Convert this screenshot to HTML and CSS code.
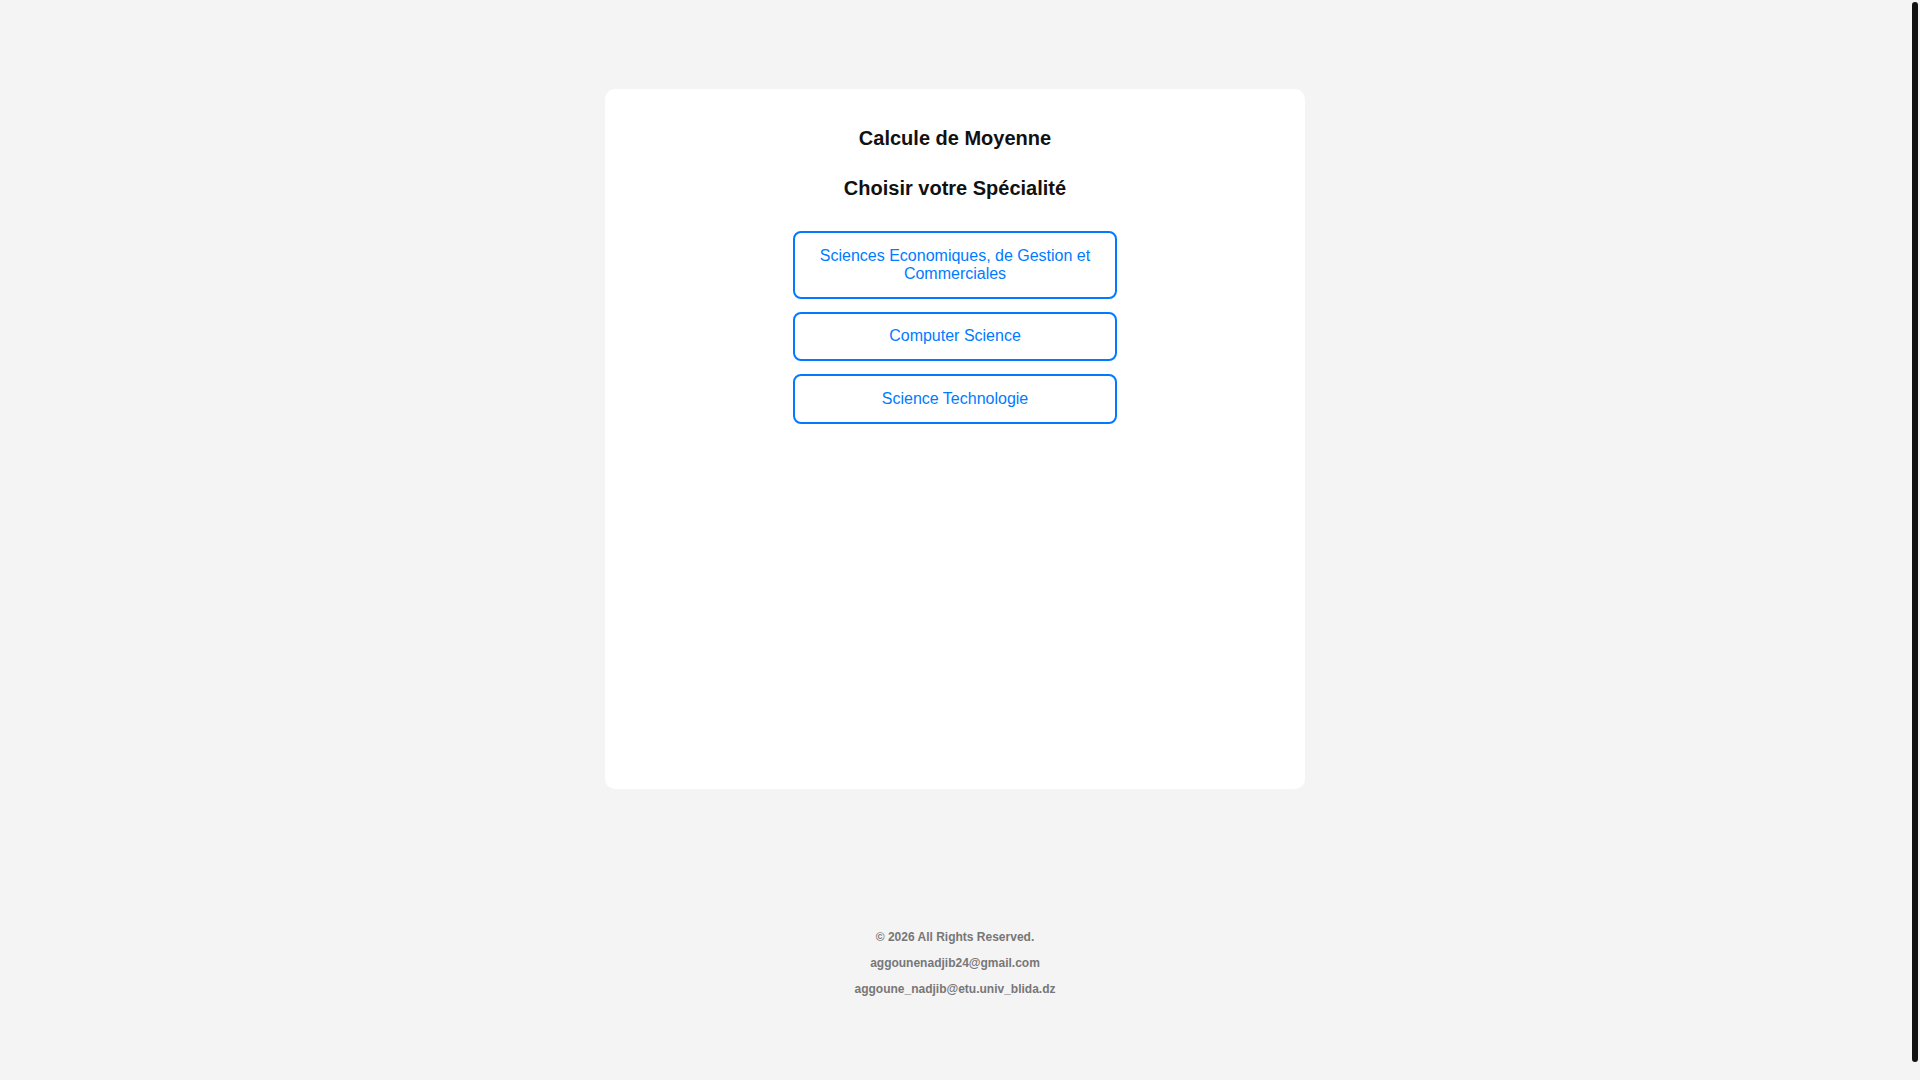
FILE: index.html
```html
<!DOCTYPE html>
<html lang="fr">
<head>
<meta charset="utf-8">
<title>Calcule de Moyenne</title>
<link rel="stylesheet" href="styles.css">
</head>
<body>
<main class="card">
  <h1 class="title">Calcule de Moyenne</h1>
  <h2 class="subtitle">Choisir votre Spécialité</h2>
  <div class="choices">
    <button class="choice">Sciences Economiques, de Gestion et Commerciales</button>
    <button class="choice">Computer Science</button>
    <button class="choice">Science Technologie</button>
  </div>
</main>
<footer class="footer">
  <p>© 2026 All Rights Reserved.</p>
  <p>aggounenadjib24@gmail.com</p>
  <p>aggoune_nadjib@etu.univ_blida.dz</p>
</footer>
<div class="scrollbar" aria-hidden="true"><div class="scrollbar-thumb"></div></div>
</body>
</html>
```

FILE: styles.css
```css
html {
  background: #f4f4f4;
}

body {
  margin: 0;
  padding-right: 10px;
  background: #f4f4f4;
  font-family: "Liberation Sans", Arial, sans-serif;
  color: #111;
}

.card {
  box-sizing: border-box;
  width: 700px;
  height: 700px;
  margin: 89px auto 0;
  padding: 20px;
  background: #fff;
  border-radius: 10px;
  text-align: center;
}

.title,
.subtitle {
  font-size: 20px;
  font-weight: bold;
  line-height: 23px;
  margin: 0;
}

.title {
  margin-top: 18px;
}

.subtitle {
  margin-top: 27px;
}

.choices {
  display: flex;
  flex-direction: column;
  align-items: center;
  gap: 13px;
  margin-top: 31px;
}

.choice {
  box-sizing: border-box;
  width: 324px;
  padding: 13.5px 20px;
  background: #fff;
  border: 2px solid #007bff;
  border-radius: 8px;
  color: #007bff;
  font-family: "Liberation Sans", Arial, sans-serif;
  font-size: 16px;
  line-height: 18.4px;
  cursor: pointer;
}

.footer {
  padding-top: 129px;
  padding-bottom: 92px;
  text-align: center;
  font-size: 12px;
  font-weight: bold;
  color: #777;
}

.footer p {
  margin: 12px 0;
}

.scrollbar {
  position: fixed;
  top: 0;
  right: 0;
  box-sizing: border-box;
  width: 10px;
  height: 100vh;
  padding: 2px;
  background: #f4f4f4;
}

.scrollbar-thumb {
  height: 1060px;
  background: #111;
  border-radius: 3px;
}
```
